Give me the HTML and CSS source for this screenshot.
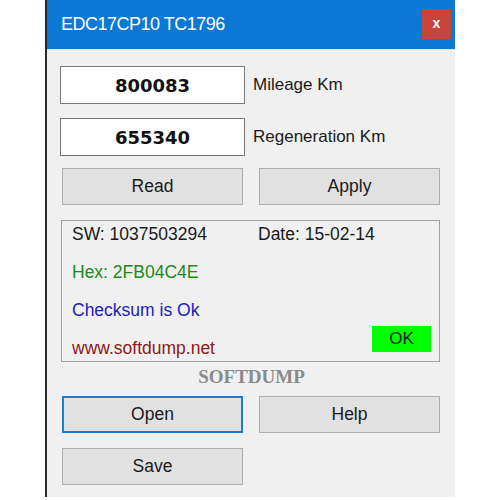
FILE: index.html
```html
<!DOCTYPE html>
<html lang="en">
<head>
    <meta charset="UTF-8">
    <meta name="viewport" content="width=device-width, initial-scale=1.0">
    <title>EDC17CP10 TC1796</title>
    <link rel="stylesheet" href="styles.css">
</head>
<body>
    <div class="window">
        <div class="titlebar">
            <span class="title">EDC17CP10 TC1796</span>
            <button class="close" type="button">x</button>
        </div>
        <div class="content">
            <div class="field-row">
                <input class="km" type="text" id="mileage" value="800083">
                <label for="mileage">Mileage Km</label>
            </div>
            <div class="field-row">
                <input class="km" type="text" id="regen" value="655340">
                <label for="regen">Regeneration Km</label>
            </div>
            <div class="btn-row">
                <button class="btn" type="button">Read</button>
                <button class="btn" type="button">Apply</button>
            </div>

            <div class="info">
                <div class="info-row">
                    <span class="sw">SW: 1037503294</span>
                    <span>Date: 15-02-14</span>
                </div>
                <div class="info-row hex">Hex: 2FB04C4E</div>
                <div class="info-row checksum">Checksum is Ok</div>
                <div class="info-row last">
                    <span class="site">www.softdump.net</span>
                    <span class="ok">OK</span>
                </div>
            </div>

            <div class="brand">SOFTDUMP</div>

            <div class="btn-row">
                <button class="btn focused" type="button">Open</button>
                <button class="btn" type="button">Help</button>
            </div>
            <div class="btn-row">
                <button class="btn" type="button">Save</button>
            </div>
        </div>
    </div>
</body>
</html>
```

FILE: styles.css
```css
body {
    margin: 0;
    background: #ffffff;
    font-family: "Liberation Sans", Arial, sans-serif;
}
.window {
    margin-left: 45px;
    width: 408px;
    height: 497px;
    border-left: 2px solid #2a2a2a;
    background: #f0f0f0;
}
.titlebar {
    height: 49px;
    background: #0a78d4;
    border-bottom: 1px solid #d6e8f7;
    display: flex;
    align-items: center;
    justify-content: space-between;
    padding: 0 4px 0 14px;
}
.title {
    color: #ffffff;
    font-size: 18px;
    letter-spacing: -0.5px;
    margin-top: -1px;
}
.close {
    width: 29px;
    height: 30px;
    border: none;
    background: #c8453c;
    color: #ffffff;
    font-family: "Liberation Sans", Arial, sans-serif;
    font-weight: bold;
    font-size: 14px;
    padding: 0 0 2px 0;
    margin-top: -2px;
}
.content {
    padding: 16px 0 0 13px;
}
.field-row {
    display: flex;
    align-items: center;
    margin-bottom: 14px;
}
.km {
    box-sizing: border-box;
    width: 185px;
    height: 38px;
    border: 1px solid #7a7a7a;
    background: #ffffff;
    text-align: center;
    font-family: "DejaVu Sans", Verdana, sans-serif;
    font-weight: bold;
    font-size: 18px;
    color: #111111;
    padding: 0;
}
.field-row label {
    margin-left: 8px;
    font-size: 17px;
    color: #1a1a1a;
}
.btn-row {
    display: flex;
    gap: 16px;
    margin-left: 2px;
    margin-top: -2px;
}
.btn-row + .btn-row {
    margin-top: 15px;
}
.btn {
    box-sizing: border-box;
    width: 181px;
    height: 37px;
    background: #e1e1e1;
    border: 1px solid #adadad;
    font-family: "Liberation Sans", Arial, sans-serif;
    font-size: 17.5px;
    color: #1a1a1a;
    padding: 0;
}
.btn.focused {
    border: 2px solid #1b7bd0;
}
.info {
    box-sizing: border-box;
    width: 379px;
    margin: 15px 0 0 1px;
    border: 1px solid #a0a0a0;
    padding: 0 8px 0 10px;
    display: flex;
    flex-direction: column;
    gap: 12px;
    font-size: 17.5px;
    color: #1a1a1a;
}
.info-row {
    height: 26px;
    display: flex;
    align-items: center;
}
.sw {
    width: 186px;
}
.hex {
    color: #1a8a1a;
}
.checksum {
    color: #2020c0;
}
.last {
    justify-content: space-between;
    align-items: flex-start;
}
.site {
    color: #8a1a1a;
    line-height: 26px;
}
.ok {
    width: 59px;
    height: 26px;
    margin-top: -9px;
    background: #00ff00;
    color: #1a1a1a;
    font-size: 17px;
    display: flex;
    align-items: center;
    justify-content: center;
}
.brand {
    height: 34px;
    line-height: 30px;
    text-align: center;
    padding-right: 12px;
    font-family: "Liberation Serif", "Times New Roman", serif;
    font-weight: bold;
    font-size: 19px;
    color: #8a8a8a;
}
.brand + .btn-row {
    margin-top: 0;
}
```
